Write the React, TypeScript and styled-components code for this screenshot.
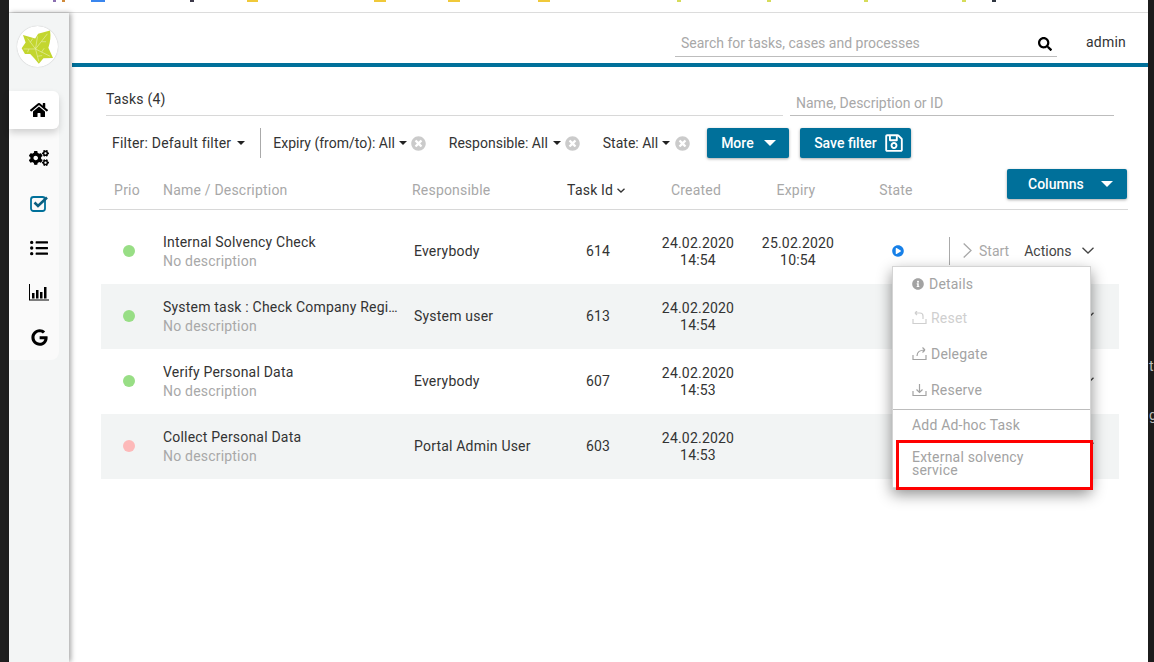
import React from "react";
import styled, { createGlobalStyle, css } from "styled-components";
import {
  FaCogs,
  FaGoogle,
  FaHome,
  FaInfoCircle,
  FaListUl,
  FaPlayCircle,
  FaRegSave,
  FaSearch,
  FaTimesCircle,
} from "react-icons/fa";

const TEAL = "#00709a";

const tasks = [
  { prio: "#98de85", name: "Internal Solvency Check", who: "Everybody", id: 614, date: "24.02.2020", time: "14:54", expDate: "25.02.2020", expTime: "10:54" },
  { prio: "#98de85", name: "System task : Check Company Register", who: "System user", id: 613, date: "24.02.2020", time: "14:54" },
  { prio: "#98de85", name: "Verify Personal Data", who: "Everybody", id: 607, date: "24.02.2020", time: "14:53" },
  { prio: "#fdb9b9", name: "Collect Personal Data", who: "Portal Admin User", id: 603, date: "24.02.2020", time: "14:53" },
];

const specks = [
  { gap: 44, w: 3, color: "#8a6fb0" },
  { gap: 6, w: 3, color: "#d08a3a" },
  { gap: 26, w: 14, color: "#3a86ee" },
  { gap: 85, w: 4, color: "#3d3a4a" },
  { gap: 53, w: 11, color: "#f0c93a" },
  { gap: 116, w: 12, color: "#f0c93a" },
  { gap: 62, w: 12, color: "#f0c93a" },
  { gap: 78, w: 12, color: "#f0c93a" },
  { gap: 127, w: 4, color: "#d6dc5a" },
  { gap: 86, w: 4, color: "#d6dc5a" },
  { gap: 93, w: 4, color: "#d6dc5a" },
  { gap: 94, w: 4, color: "#d6dc5a" },
  { gap: 26, w: 4, color: "#2f3640" },
];

const GlobalStyle = createGlobalStyle`
  html, body {
    margin: 0;
    height: 662px;
    overflow: hidden;
    background: #fff;
    font-family: Roboto, "Liberation Sans", sans-serif;
    font-size: 14px;
    letter-spacing: 0.2px;
    color: #333;
  }
`;

const Frame = styled.div`
  display: flex;
  width: 1154px;
  height: 662px;
  overflow: hidden;
`;

const LeftEdge = styled.div`
  width: 9px;
  flex-shrink: 0;
  background: #1f1f1f;
`;

const RightEdge = styled.div`
  width: 6px;
  flex-shrink: 0;
  box-sizing: border-box;
  padding: 342px 0 0 1px;
  background: #1c1c1c;
  color: #bdbdbd;
  line-height: 49px;
  overflow: hidden;
`;

const Window = styled.div`
  flex: 1;
  min-width: 0;
  display: flex;
  flex-direction: column;
`;

const ChromeStrip = styled.div`
  display: flex;
  align-items: flex-start;
  height: 12px;
  border-bottom: 1px solid #dcdcdc;
  flex-shrink: 0;
`;

const Speck = styled.span<{ $gap: number; $w: number; $color: string }>`
  width: ${(p) => p.$w}px;
  height: 2px;
  margin-left: ${(p) => p.$gap}px;
  background: ${(p) => p.$color};
`;

const Body = styled.div`
  flex: 1;
  display: flex;
  min-height: 0;
`;

const Sidebar = styled.aside`
  width: 60px;
  flex-shrink: 0;
  box-sizing: border-box;
  padding-top: 13px;
  background: #f3f5f5;
  box-shadow: 2px 0 5px rgba(0, 0, 0, 0.35);
  position: relative;
  z-index: 2;
`;

const Logo = styled.div`
  width: 41px;
  height: 41px;
  margin-left: 8px;
  display: flex;
  align-items: center;
  justify-content: center;
  border-radius: 50%;
  background: #fff;
  box-shadow: 0 0 1px rgba(0, 0, 0, 0.3);
`;

const Nav = styled.nav`
  width: 50px;
  height: 269px;
  margin-top: 24px;
  display: flex;
  flex-direction: column;
  background: #fafafa;
  border-radius: 0 8px 8px 0;
`;

const NavItem = styled.div<{ $active?: boolean; $color?: string }>`
  display: flex;
  align-items: center;
  justify-content: center;
  padding-left: 10px;
  height: ${(p) => (p.$active ? 38 : 45)}px;
  margin-bottom: ${(p) => (p.$active ? 7 : 0)}px;
  color: ${(p) => p.$color ?? "#000"};
  font-size: 18px;
  ${(p) =>
    p.$active &&
    css`
      background: #fff;
      border-radius: 0 6px 6px 0;
      box-shadow: 0 4px 7px rgba(0, 0, 0, 0.16);
    `}
`;

const Main = styled.main`
  flex: 1;
  min-width: 0;
  display: flex;
  flex-direction: column;
`;

const TopBar = styled.header`
  height: 50px;
  margin-left: 3px;
  box-sizing: border-box;
  display: flex;
  align-items: flex-start;
  flex-shrink: 0;
`;

const TealLine = styled.div`
  height: 4px;
  margin-left: 3px;
  background: ${TEAL};
  flex-shrink: 0;
`;

const SearchBox = styled.div`
  width: 382px;
  height: 44px;
  margin-left: 603px;
  box-sizing: border-box;
  padding: 21px 5px 0 6px;
  display: flex;
  justify-content: space-between;
  align-items: flex-start;
  border-bottom: 1px solid #bdbdbd;
  color: #a8a8a8;
  letter-spacing: 0;
  line-height: 18px;
`;

const SearchIcon = styled(FaSearch)`
  margin-top: 3px;
  color: #000;
  font-size: 14px;
`;

const UserName = styled.span`
  margin: 21px 0 0 29px;
  line-height: 16px;
  color: #333;
`;

const Content = styled.div`
  padding: 24px 0 0 30px;
  display: flex;
  flex-direction: column;
  flex: 1;
`;

const TitleRow = styled.div`
  display: flex;
  gap: 7px;
  height: 25px;
  margin-left: 7px;
`;

const Title = styled.div`
  width: 677px;
  box-sizing: border-box;
  line-height: 16px;
  border-bottom: 1px solid #d8d8d8;
`;

const TaskSearch = styled.div`
  width: 324px;
  box-sizing: border-box;
  padding: 4px 0 0 6px;
  color: #a8a8a8;
  letter-spacing: 0;
  line-height: 16px;
  border-bottom: 1px solid #bdbdbd;
`;

const FilterRow = styled.div`
  display: flex;
  align-items: center;
  height: 30px;
  margin: 12px 0 0 13px;
`;

const SavedFilter = styled.span`
  display: inline-flex;
  align-items: center;
  line-height: 16px;
`;

const FilterLabel = styled.span<{ $left?: number }>`
  display: inline-flex;
  align-items: center;
  margin-left: ${(p) => p.$left ?? 0}px;
  line-height: 16px;
  letter-spacing: 0;
`;

const Caret = styled.i<{ $size?: number; $color?: string; $left?: number }>`
  display: inline-block;
  width: 0;
  height: 0;
  margin-left: ${(p) => p.$left ?? 5}px;
  border-left: ${(p) => p.$size ?? 4}px solid transparent;
  border-right: ${(p) => p.$size ?? 4}px solid transparent;
  border-top: ${(p) => p.$size ?? 4}px solid ${(p) => p.$color ?? "#222"};
`;

const Divider = styled.span`
  width: 1px;
  height: 30px;
  margin: 0 12px 0 15px;
  background: #aaa;
`;

const ClearIcon = styled(FaTimesCircle)<{ $left?: number }>`
  margin-left: ${(p) => p.$left ?? 4}px;
  color: #cbcbcb;
  font-size: 15px;
`;

const Button = styled.button<{ $width: number; $left?: number; $pad?: number }>`
  width: ${(p) => p.$width}px;
  height: 30px;
  margin-left: ${(p) => p.$left ?? 0}px;
  padding: 0 0 0 ${(p) => p.$pad ?? 14}px;
  display: inline-flex;
  align-items: center;
  flex-shrink: 0;
  box-sizing: border-box;
  border: 0;
  border-radius: 2px;
  background: ${TEAL};
  color: #fff;
  font-family: inherit;
  font-size: 14px;
  font-weight: 500;
  letter-spacing: 0;
  white-space: nowrap;
  box-shadow: 0 1px 3px rgba(0, 0, 0, 0.35);
`;

const SaveIcon = styled(FaRegSave)`
  margin-left: 7px;
  font-size: 20px;
`;

const tableColumns = css`
  display: grid;
  grid-template-columns: 56px 251px 130px 120px 80px 120px 80px 1fr;
`;

const HeaderRow = styled.div`
  ${tableColumns};
  align-items: center;
  width: 1029px;
  height: 41px;
  margin-top: 11px;
  box-sizing: border-box;
  border-bottom: 1px solid #d8d8d8;
  color: #a8a8a8;
`;

const HeaderCell = styled.div<{ $center?: boolean; $pad?: number; $dark?: boolean }>`
  display: flex;
  align-items: center;
  padding-top: 2px;
  padding-left: ${(p) => p.$pad ?? 0}px;
  justify-content: ${(p) => (p.$center ? "center" : "flex-start")};
  color: ${(p) => (p.$dark ? "#333" : "inherit")};
`;

const ColumnsCell = styled.div`
  display: flex;
  justify-content: flex-end;
  align-self: start;
  padding-right: 1px;
`;

const Rows = styled.div`
  width: 1018px;
  margin: 9px 0 0 2px;
`;

const Row = styled.div<{ $shaded: boolean }>`
  ${tableColumns};
  align-items: center;
  height: 65px;
  background: ${(p) => (p.$shaded ? "#f2f4f4" : "#fff")};
`;

const Dot = styled.span<{ $color: string }>`
  justify-self: center;
  width: 12px;
  height: 12px;
  margin-bottom: 2px;
  border-radius: 50%;
  background: ${(p) => p.$color};
`;

const NameCell = styled.div`
  padding-left: 6px;
  min-width: 0;
  line-height: 19px;
`;

const TaskName = styled.div`
  max-width: 238px;
  white-space: nowrap;
  overflow: hidden;
  text-overflow: ellipsis;
`;

const TaskDescription = styled.div`
  color: #a8a8a8;
`;

const PlainCell = styled.div<{ $pad?: number }>`
  margin-bottom: 2px;
  padding-left: ${(p) => p.$pad ?? 0}px;
`;

const CenterCell = styled.div`
  text-align: center;
  line-height: 17px;
`;

const StateCell = styled.div`
  display: flex;
  justify-content: center;
  margin-bottom: 2px;
  color: #1780e8;
  font-size: 12px;
`;

const ActionsCell = styled.div`
  display: flex;
  align-items: center;
  height: 28px;
  margin: 0 0 2px 11px;
  padding-left: 13px;
  border-left: 1px solid #aaa;
  color: #a8a8a8;
`;

const StartLabel = styled.span`
  margin-left: 7px;
  letter-spacing: 0;
`;

const ActionsLabel = styled.span`
  margin: 0 10px 0 15px;
  letter-spacing: 0;
  color: #444;
`;

const ActionsArrow = styled.span`
  display: flex;
  color: #444;
`;

const Dropdown = styled.div`
  position: absolute;
  top: 266px;
  left: 892px;
  width: 199px;
  height: 222px;
  box-sizing: border-box;
  background: #fff;
  border: 1px solid #d4d4d4;
  box-shadow: 0 6px 14px rgba(0, 0, 0, 0.45);
  color: #a3a3a3;
  z-index: 3;
`;

const MenuItem = styled.div<{ $h: number; $faded?: boolean; $gap?: number }>`
  display: flex;
  align-items: center;
  gap: ${(p) => p.$gap ?? 4}px;
  height: ${(p) => p.$h}px;
  box-sizing: border-box;
  padding: 0 0 2px 19px;
  color: ${(p) => (p.$faded ? "#cfcfcf" : "inherit")};
`;

const MenuLine = styled.div`
  height: 1px;
  background: #bdbdbd;
`;

const MenuNote = styled.div`
  width: 130px;
  padding: 10px 0 0 19px;
  line-height: 13px;
`;

const Highlight = styled.div`
  position: absolute;
  top: 173px;
  left: 3px;
  width: 197px;
  height: 50px;
  box-sizing: border-box;
  border: 3px solid #f00;
`;

const Leaf = () => (
  <svg width="33" height="36" viewBox="60 90 100 108">
    <path
      fill="#c3d62f"
      d="M66 108 L103 118 L112 104 L148 94 Q152 120 143 146 L157 177 L128 178 L114 195 L100 178 L88 165 L72 165 L62 148 L74 130 Z"
    />
    <path
      fill="none"
      stroke="#e6eeab"
      strokeWidth="2"
      d="M104 150 L80 118 M104 150 L110 112 M104 150 L140 104 M104 150 L148 172 M104 150 L114 188 M104 150 L68 150 M88 130 L96 118 M122 128 L136 128 M122 160 L130 148 M110 172 L124 170 M84 150 L80 160"
    />
  </svg>
);

const CheckIcon = () => (
  <svg width="19" height="17" viewBox="0 0 19 17" fill="none">
    <rect x="1" y="2" width="14" height="14" rx="2.500" stroke={TEAL} strokeWidth="1.800" />
    <path d="M4.500 7.500 L8 11 L17 2.500" stroke="#0b5f80" strokeWidth="2.600" />
  </svg>
);

const BarsIcon = () => (
  <svg width="20" height="17" viewBox="0 0 20 17" fill="#000">
    <path d="M0 0h1v15.500h19v1H0z" />
    <path d="M3 9h2.500v5.500H3zM7 6h2.500v8.500H7zM11 8h2.500v6.500H11zM15 3h2.500v11.500H15z" />
  </svg>
);

const TrayIcon = ({ arrow }: { arrow: string }) => (
  <svg width="15" height="14" viewBox="0 0 15 14" fill="none" stroke="currentColor" strokeWidth="1.200">
    <path d="M1 8v4.500h13V8" />
    <path d={arrow} />
  </svg>
);

const Chevron = ({ w, h, dir }: { w: number; h: number; dir: "down" | "right" }) => (
  <svg width={w} height={h} viewBox={`0 0 ${w} ${h}`} fill="none" stroke="currentColor" strokeWidth="1.300">
    <path d={dir === "down" ? `M0.500 0.700 L${w / 2} ${h - 1} L${w - 0.5} 0.700` : `M0.700 0.500 L${w - 1} ${h / 2} L0.700 ${h - 0.5}`} />
  </svg>
);

export default function App() {
  return (
    <>
      <GlobalStyle />
      <Frame>
        <LeftEdge />
        <Window>
          <ChromeStrip>
            {specks.map((s, i) => (
              <Speck key={i} $gap={s.gap} $w={s.w} $color={s.color} />
            ))}
          </ChromeStrip>
          <Body>
            <Sidebar>
              <Logo>
                <Leaf />
              </Logo>
              <Nav>
                <NavItem $active>
                  <FaHome />
                </NavItem>
                <NavItem>
                  <FaCogs size={20} />
                </NavItem>
                <NavItem $color={TEAL}>
                  <CheckIcon />
                </NavItem>
                <NavItem>
                  <FaListUl />
                </NavItem>
                <NavItem>
                  <BarsIcon />
                </NavItem>
                <NavItem>
                  <FaGoogle size={17} />
                </NavItem>
              </Nav>
            </Sidebar>
            <Main>
              <TopBar>
                <SearchBox>
                  Search for tasks, cases and processes
                  <SearchIcon />
                </SearchBox>
                <UserName>admin</UserName>
              </TopBar>
              <TealLine />
              <Content>
                <TitleRow>
                  <Title>Tasks (4)</Title>
                  <TaskSearch>Name, Description or ID</TaskSearch>
                </TitleRow>
                <FilterRow>
                  <SavedFilter>
                    Filter: Default filter
                    <Caret $left={6} />
                  </SavedFilter>
                  <Divider />
                  <FilterLabel>
                    Expiry (from/to): All
                    <Caret $left={4} />
                  </FilterLabel>
                  <ClearIcon />
                  <FilterLabel $left={23}>
                    Responsible: All
                    <Caret />
                  </FilterLabel>
                  <ClearIcon />
                  <FilterLabel $left={23}>
                    State: All
                    <Caret $left={4} />
                  </FilterLabel>
                  <ClearIcon $left={5} />
                  <Button $width={82} $left={17}>
                    More
                    <Caret $size={6} $color="#fff" $left={10} />
                  </Button>
                  <Button $width={111} $left={11}>
                    Save filter
                    <SaveIcon />
                  </Button>
                </FilterRow>
                <HeaderRow>
                  <HeaderCell $center>Prio</HeaderCell>
                  <HeaderCell $pad={8}>Name / Description</HeaderCell>
                  <HeaderCell $pad={6}>Responsible</HeaderCell>
                  <HeaderCell $center $dark>
                    Task Id&nbsp;
                    <Chevron w={8} h={5} dir="down" />
                  </HeaderCell>
                  <HeaderCell $center>Created</HeaderCell>
                  <HeaderCell $center>Expiry</HeaderCell>
                  <HeaderCell $center>State</HeaderCell>
                  <ColumnsCell>
                    <Button $width={120} $pad={21}>
                      Columns
                      <Caret $size={6} $color="#fff" $left={17} />
                    </Button>
                  </ColumnsCell>
                </HeaderRow>
                <Rows>
                  {tasks.map((t, i) => (
                    <Row key={t.id} $shaded={i % 2 === 1}>
                      <Dot $color={t.prio} />
                      <NameCell>
                        <TaskName>{t.name}</TaskName>
                        <TaskDescription>No description</TaskDescription>
                      </NameCell>
                      <PlainCell $pad={6}>{t.who}</PlainCell>
                      <CenterCell>{t.id}</CenterCell>
                      <CenterCell>
                        {t.date}
                        <br />
                        {t.time}
                      </CenterCell>
                      <CenterCell>
                        {t.expDate}
                        <br />
                        {t.expTime}
                      </CenterCell>
                      <StateCell>
                        <FaPlayCircle />
                      </StateCell>
                      <ActionsCell>
                        <Chevron w={9} h={15} dir="right" />
                        <StartLabel>Start</StartLabel>
                        <ActionsLabel>Actions</ActionsLabel>
                        <ActionsArrow>
                          <Chevron w={12} h={7} dir="down" />
                        </ActionsArrow>
                      </ActionsCell>
                    </Row>
                  ))}
                </Rows>
              </Content>
            </Main>
          </Body>
        </Window>
        <RightEdge>
          t
          <br />g
        </RightEdge>
      </Frame>
      <Dropdown>
        <MenuItem $h={35} $gap={5}>
          <FaInfoCircle size={12} />
          Details
        </MenuItem>
        <MenuItem $h={34} $faded>
          <TrayIcon arrow="M3 2h5a3 3 0 0 1 3 3v3M3 2l2-2M3 2l2 2" />
          Reset
        </MenuItem>
        <MenuItem $h={37}>
          <TrayIcon arrow="M5 9c0-4 3-6 8-6M13 3l-2.500-2.500M13 3l-2.500 2.500" />
          Delegate
        </MenuItem>
        <MenuItem $h={36}>
          <TrayIcon arrow="M7.500 1v8M4.500 6.500l3 3 3-3" />
          Reserve
        </MenuItem>
        <MenuLine />
        <MenuItem $h={31}>Add Ad-hoc Task</MenuItem>
        <MenuNote>External solvency service</MenuNote>
        <Highlight />
      </Dropdown>
    </>
  );
}
